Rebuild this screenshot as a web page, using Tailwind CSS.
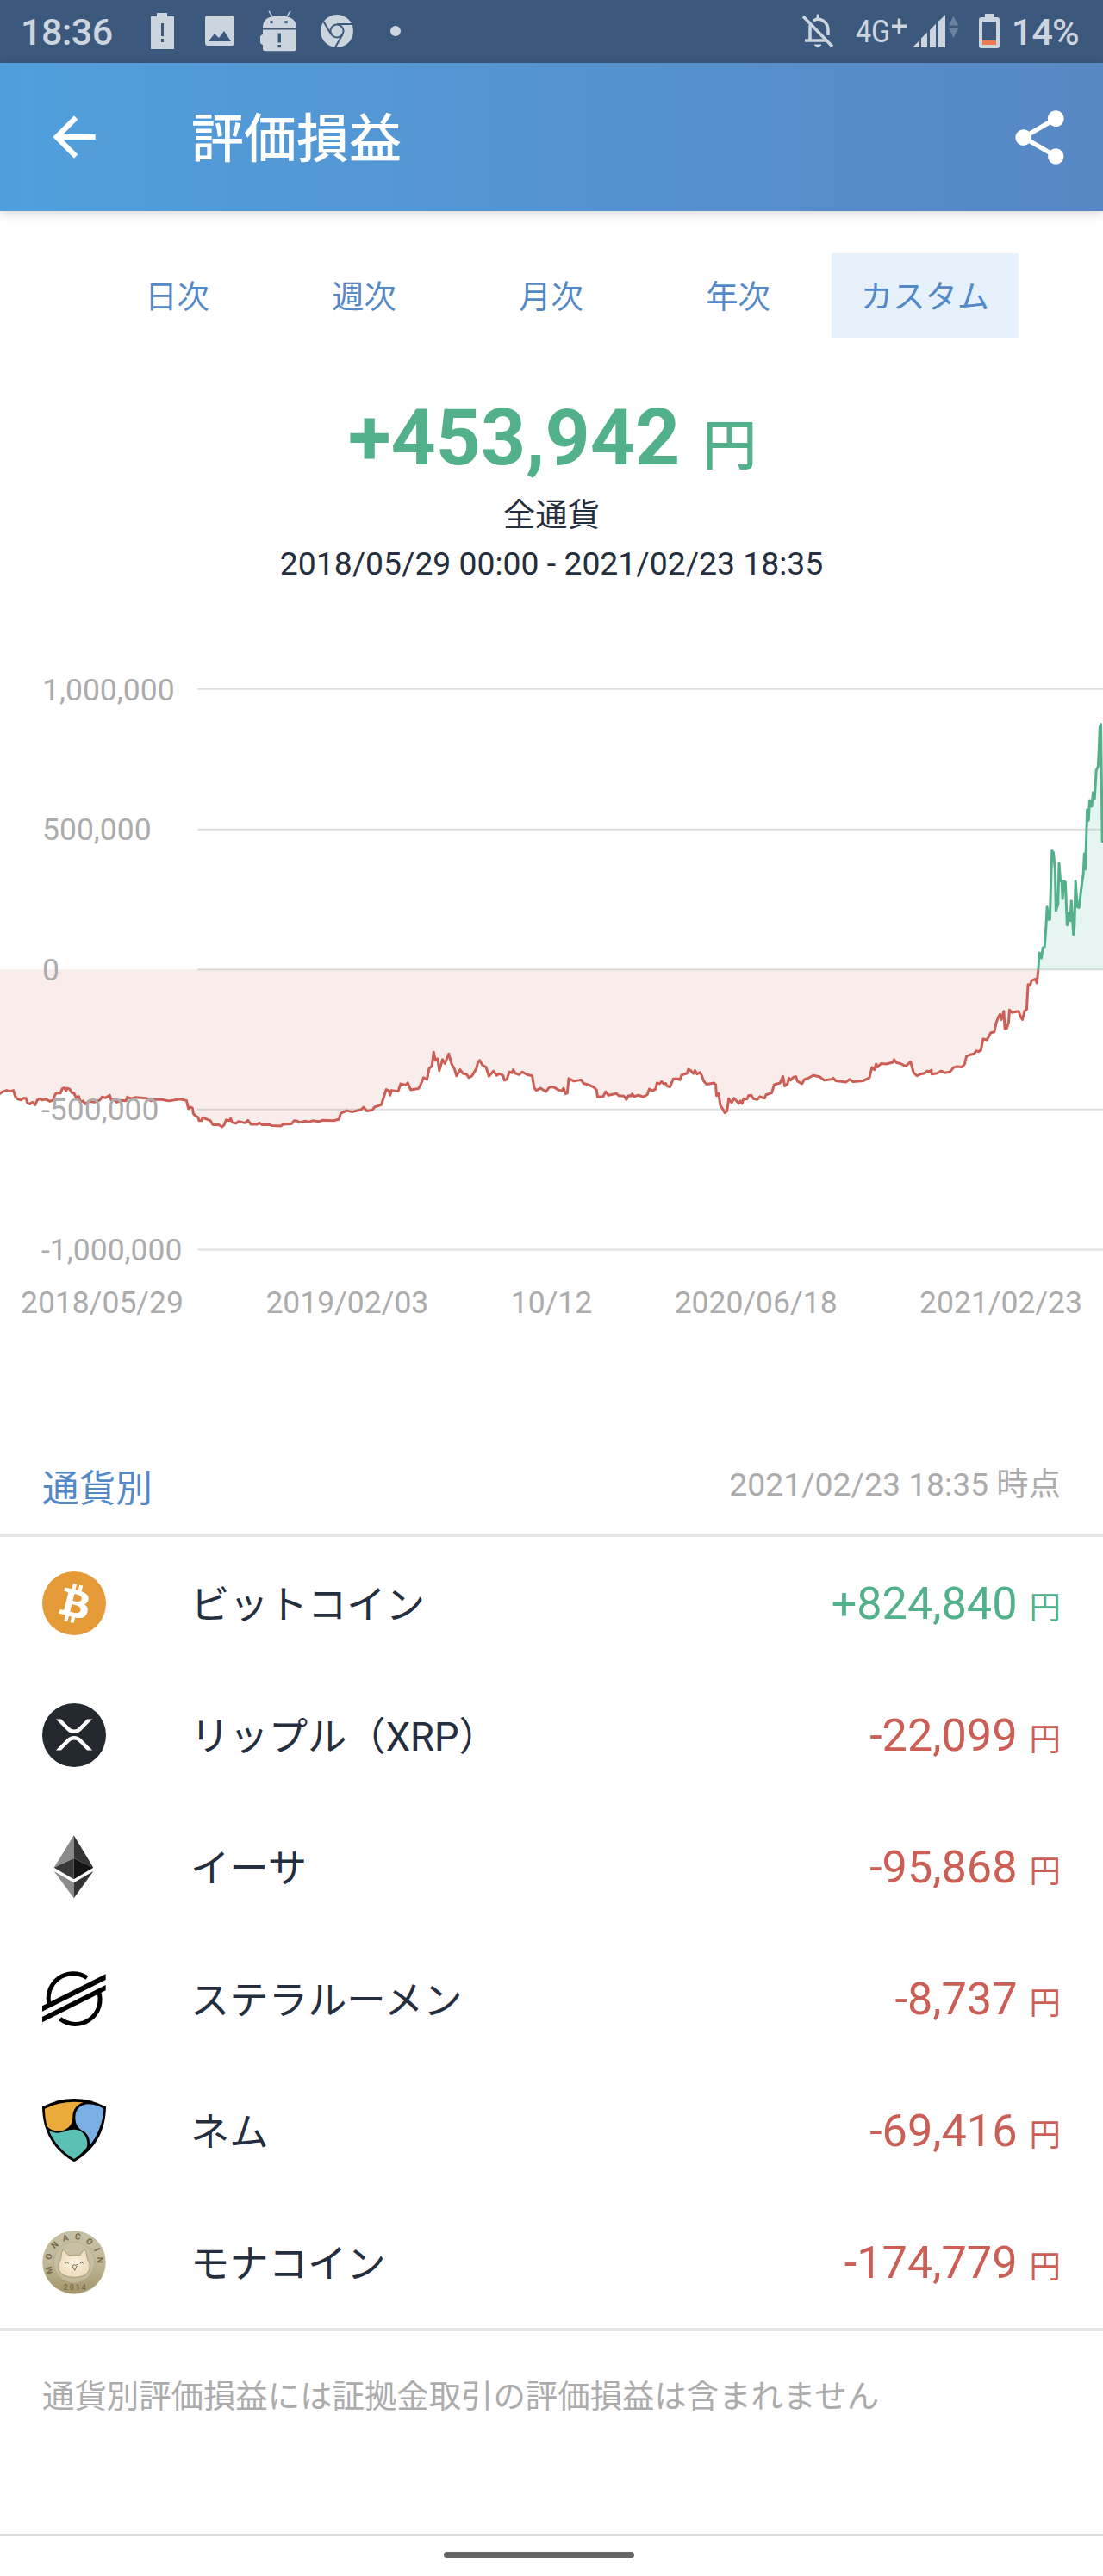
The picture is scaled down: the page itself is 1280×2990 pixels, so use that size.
<!DOCTYPE html>
<html lang="ja">
<head>
  <meta charset="UTF-8">
  <title>評価損益</title>
  <script src="https://cdn.jsdelivr.net/npm/@tailwindcss/browser@4"></script>
</head>
<body class="bg-white w-[1280px] h-[2990px] overflow-hidden flex flex-col leading-none text-[#252e3e] font-[Roboto,'Noto_Sans_CJK_JP',sans-serif]">

  <!-- Status bar -->
  <div class="h-[73px] shrink-0 bg-[#3c597d] text-[#ccd4de] flex items-center pl-6 pr-[28px] pb-[2px]">
    <span class="text-[43px] font-medium tracking-[-0.5px] w-[146px] pt-[4px]">18:36</span>
    <svg class="w-[36px] h-[44px]" viewBox="0 0 36 44" fill="currentColor">
      <path fill-rule="evenodd" d="M5 5h7V1h12v4h8v38H5zM17 13v15h3V13zM17 31v4h3v-4z"/>
    </svg>
    <svg class="w-[36px] h-[36px] ml-[31px]" viewBox="0 0 36 36" fill="currentColor">
      <path fill-rule="evenodd" d="M4 0h28a3 3 0 0 1 3 3v29a3 3 0 0 1-3 3H4a3 3 0 0 1-3-3V3a3 3 0 0 1 3-3zM5 30h26l-8-12-6 8-5-5z"/>
    </svg>
    <svg class="w-[44px] h-[48px] ml-[28px]" viewBox="0 -5 44 60" preserveAspectRatio="none" fill="currentColor">
      <path d="M11 -4l4 8M36 -4l-4 8" stroke="currentColor" stroke-width="1.5" fill="none"/>
      <path fill-rule="evenodd" d="M4 21C4 6 12 3 23 3s20 3 20 18zM14 10a2 2 0 1 0 .1 0zM31 10a2 2 0 1 0 .1 0z"/>
      <path fill-rule="evenodd" d="M4 23h39v28a3 3 0 0 1-3 3H7a3 3 0 0 1-3-3v-6q-3-1-3-4v-7q0-3 3-4zM21.500 28v14h3.500V28zM21.500 45v4h3.500v-4z"/>
    </svg>
    <svg class="w-[40px] h-[40px] ml-[26px]" viewBox="0 0 40 40">
      <circle cx="20" cy="20" r="19" fill="currentColor"/>
      <g fill="none" stroke="#3c597d" stroke-width="2">
        <circle cx="20" cy="20" r="7.5"/>
        <path d="M20 12h18M13.300 24L4.500 9M26.500 24L18 39"/>
      </g>
    </svg>
    <span class="w-[12px] h-[12px] rounded-full bg-[#ccd4de] ml-[42px]"></span>

    <svg class="w-[40px] h-[40px] ml-auto" viewBox="0 0 40 40" fill="none" stroke="currentColor" stroke-width="3.500">
      <path d="M3 3l34 35"/>
      <path d="M11 13v17M5 31h24M15 8c8-5 17 2 17 11v6"/>
      <path d="M16 36h8l-4 3zM19 1h2v4h-2z" fill="currentColor" stroke-width="1"/>
    </svg>
    <svg class="w-[62px] h-[44px] ml-[24px]" viewBox="0 0 62 44" fill="currentColor">
      <text x="0" y="35" font-family="Roboto" font-size="37" textLength="40" lengthAdjust="spacingAndGlyphs">4G</text>
      <path d="M42 14.500h17v3.500H42zM48.700 7.500h3.500v18h-3.500z"/>
    </svg>
    <svg class="w-[54px] h-[38px] ml-[4px]" viewBox="0 0 54 38" fill="currentColor">
      <path d="M0 38l8-8v8zM10 27.500l7-7V38h-7zM20 18l7-7.500V38h-7zM30 8l8-8v38h-8z"/>
      <path fill="#6c819c" d="M42 12.500l5.500-11 5.500 11zM42 16h11l-5.500 11z"/>
    </svg>
    <svg class="w-[24px] h-[40px] ml-[23px]" viewBox="0 0 24 40">
      <path fill="currentColor" fill-rule="evenodd" d="M7 0h10v4h4a3 3 0 0 1 3 3v30a3 3 0 0 1-3 3H3a3 3 0 0 1-3-3V7a3 3 0 0 1 3-3h4zM4 9v26h16V9z"/>
      <path fill="#ee7a4f" d="M4 31h16v5H4z"/>
    </svg>
    <span class="text-[43px] font-medium tracking-[-0.8px] pt-[4px] ml-[14px]">14%</span>
  </div>

  <!-- App bar -->
  <header class="h-[172px] shrink-0 bg-linear-to-r from-[#509fdc] to-[#5788c4] text-white flex items-center pl-[49px] pr-[36px] shadow-[0_2px_12px_rgba(0,0,0,0.18)]">
    <svg class="w-[74px] h-[74px]" viewBox="0 0 24 24" fill="currentColor"><path d="M20 11H7.830l5.590-5.590L12 4l-8 8 8 8 1.410-1.410L7.830 13H20v-2z"/></svg>
    <h1 class="text-[61px] font-medium ml-[99px] pt-[7px]">評価損益</h1>
    <svg class="w-[75px] h-[75px] ml-auto" viewBox="0 0 24 24" fill="currentColor"><path d="M18 16.080c-.76 0-1.440.3-1.960.77L8.910 12.700c.05-.23.09-.46.09-.7s-.04-.47-.09-.7l7.050-4.110c.54.5 1.250.81 2.040.81 1.660 0 3-1.340 3-3s-1.340-3-3-3-3 1.340-3 3c0 .24.04.47.09.7L8.040 9.810C7.500 9.310 6.790 9 6 9c-1.660 0-3 1.340-3 3s1.340 3 3 3c.79 0 1.500-.31 2.040-.81l7.120 4.160c-.05.21-.08.43-.08.65 0 1.610 1.310 2.920 2.920 2.920s2.920-1.310 2.920-2.920-1.310-2.920-2.920-2.920z"/></svg>
  </header>

  <!-- Period tabs -->
  <nav class="mt-[49px] mx-[97px] grid grid-cols-5 h-[98px] shrink-0 text-[37.33px] text-[#5489c7] pr-[1px]">
    <a class="flex items-center justify-center pt-[5px]">日次</a>
    <a class="flex items-center justify-center pt-[5px]">週次</a>
    <a class="flex items-center justify-center pt-[5px]">月次</a>
    <a class="flex items-center justify-center pt-[5px]">年次</a>
    <a class="flex items-center justify-center pt-[5px] bg-[#e7f1fb]">カスタム</a>
  </nav>

  <!-- Total -->
  <section class="h-[326px] shrink-0 pt-[71px] flex flex-col items-center">
    <div class="flex items-baseline text-[#52b08b] h-[91px] pl-[2px]">
      <span class="text-[91px] font-bold">+453,942</span>
      <span class="text-[63px] font-medium ml-[26px]">円</span>
    </div>
    <p class="text-[37.33px] mt-[26px]">全通貨</p>
    <p class="text-[37.33px] mt-[19px]">2018/05/29 00:00 - 2021/02/23 18:35</p>
  </section>

  <!-- Chart -->
  <section class="relative h-[813px] shrink-0 text-[35.5px] text-[#acacac]">
    <svg class="absolute left-0 top-[42px] w-[1280px] h-[800px]" viewBox="0 0 3136 1568" preserveAspectRatio="none">
      <path d="M561 78H3136M561 397.500H3136M561 716H3136M561 1034.500H3136M561 1353.500H3136" stroke="#dfdfdf" stroke-width="4" fill="none"/>
      <g stroke-width="3" stroke-linejoin="round">
        <path vector-effect="non-scaling-stroke" stroke="#cb5e55" fill="#cb5e55" fill-opacity=".11" d="M-20 716V998H0L8 994 18 991 30 993 38 991 43 1004 50 1011 60 1013 66 1009 74 1009 78 1020 85 1022 92 1018 100 1024 106 1013 113 1010 120 1013 130 1011 142 1016 151 1013 156 1002 160 997 172 997 177 987 183 985 188 992 191 986 198 988 204 996 210 997 216 1007 224 1005 229 1017 236 1015 242 1022 252 1016 268 1018 284 1013 290 1006 300 1008 312 1002 316 1013 324 1012 332 1018 344 1014 358 1015 362 1006 372 1010 386 1007 416 1009 430 1015 438 1012 460 1012 480 1015 512 1011 530 1014 536 1033 541 1029 547 1031 550 1044 556 1049 563 1052 566 1060 573 1060 576 1053 597 1059 605 1069 622 1069 631 1074 637 1070 643 1058 652 1060 656 1055 660 1064 671 1066 678 1062 697 1065 705 1059 713 1068 731 1068 738 1065 745 1069 766 1069 772 1071 799 1072 805 1068 829 1067 836 1060 846 1061 850 1064 868 1061 878 1063 888 1060 907 1062 916 1059 948 1060 963 1057 969 1043 986 1037 1001 1040 1026 1035 1034 1029 1043 1038 1058 1036 1065 1029 1084 1024 1098 989 1106 992 1109 1002 1113 991 1132 993 1139 976 1153 979 1159 974 1168 990 1190 987 1197 976 1204 962 1214 966 1220 941 1228 936 1233 904 1238 923 1244 919 1249 946 1258 921 1265 930 1276 908 1284 931 1292 942 1298 958 1308 944 1317 953 1326 954 1333 962 1342 958 1354 942 1359 927 1364 923 1372 934 1382 938 1390 959 1403 947 1412 957 1419 953 1430 957 1434 968 1441 966 1448 949 1456 951 1459 944 1465 952 1476 955 1485 949 1498 955 1513 958 1519 986 1525 991 1537 986 1552 994 1563 983 1575 984 1588 990 1598 992 1602 986 1608 999 1613 997 1617 964 1632 970 1652 967 1659 975 1672 978 1687 983 1696 990 1699 1006 1715 1005 1722 994 1730 1002 1752 998 1759 1003 1774 1004 1781 1012 1787 1003 1794 1004 1797 999 1803 1005 1815 1002 1829 1006 1840 1001 1846 988 1855 992 1864 988 1868 974 1875 976 1881 971 1887 976 1893 975 1896 981 1905 983 1914 965 1928 965 1933 967 1938 956 1954 952 1957 943 1964 946 1972 953 1976 946 1982 954 1990 950 1995 957 2001 970 2009 977 2030 974 2035 978 2037 1003 2043 998 2048 1025 2056 1035 2061 1042 2067 1038 2072 1010 2080 1019 2087 1009 2101 1021 2105 1015 2110 1021 2114 1010 2124 1011 2128 1003 2136 1002 2142 1010 2153 1012 2161 1005 2169 1008 2174 1009 2178 1001 2194 997 2201 978 2218 974 2226 959 2231 981 2239 976 2243 963 2248 968 2256 961 2263 960 2267 970 2280 976 2287 966 2301 962 2312 957 2330 960 2344 968 2364 966 2369 963 2376 969 2405 972 2416 966 2425 971 2455 969 2472 962 2479 939 2486 944 2491 931 2495 938 2505 930 2520 931 2539 927 2542 921 2549 928 2560 930 2575 936 2589 926 2597 950 2607 958 2617 954 2629 952 2636 947 2643 949 2648 945 2649 954 2665 952 2676 947 2686 951 2701 949 2711 939 2720 937 2735 938 2742 932 2748 913 2758 910 2770 908 2775 901 2782 903 2789 899 2795 874 2806 876 2817 860 2827 858 2832 838 2838 825 2843 818 2847 830 2854 811 2857 851 2862 850 2868 835 2870 808 2877 814 2896 811 2902 824 2907 830 2913 811 2919 807 2923 750 2929 752 2933 741 2944 738 2948 747 2952 716"/>
        <path vector-effect="non-scaling-stroke" stroke="#52b08b" fill="#3aae93" fill-opacity=".12" d="M2952 716L2955 678 2961 690 2965 667 2970 664 2974 620 2977 574 2981 602 2985 602 2989 490 2991 446 2995 450 3000 490 3002 582 3008 568 3011 474 3015 515 3019 515 3021 555 3025 515 3029 517 3034 615 3039 588 3043 605 3046 560 3052 637 3055 615 3058 515 3063 573 3068 575 3073 540 3077 515 3080 500 3083 453 3086 488 3091 353 3095 377 3098 331 3104 345 3108 313 3112 327 3117 262 3122 255 3124 225 3127 165 3130 158 3134 425H3160V716"/>
      </g>
    </svg>
    <div class="relative w-[229px] flex flex-col pl-[49px] pt-[2px]">
      <div class="h-[162.6px] flex items-center">1,000,000</div>
      <div class="h-[162.6px] flex items-center">500,000</div>
      <div class="h-[162.6px] flex items-center">0</div>
      <div class="h-[162.6px] flex items-center -ml-[1px]">-500,000</div>
      <div class="h-[162.6px] flex items-center -ml-[1px]">-1,000,000</div>
    </div>
    <div class="absolute left-6 right-6 top-[777px] flex justify-between">
      <span>2018/05/29</span>
      <span>2019/02/03</span>
      <span>10/12</span>
      <span>2020/06/18</span>
      <span>2021/02/23</span>
    </div>
  </section>

  <!-- Per currency -->
  <section class="flex flex-col">
    <div class="h-[253px] border-b-4 border-[#e5e5e5] flex items-end justify-between pl-[49px] pr-[49px]">
      <h2 class="text-[42.67px] text-[#5489c7] pb-[30px]">通貨別</h2>
      <span class="text-[37.33px] text-[#acacac] pb-[38px]">2021/02/23 18:35 時点</span>
    </div>

    <ul class="text-[45.33px] border-b-4 border-[#e5e5e5]">
      <li class="h-[153px] flex items-center px-[49px]">
        <svg class="w-[74px] h-[74px]" viewBox="0 0 32 32">
          <circle cx="16" cy="16" r="16" fill="#e49b37"/>
          <path fill="#fff" d="M23.189 14.020c.314-2.096-1.283-3.223-3.465-3.975l.708-2.840-1.728-.43-.69 2.765c-.454-.114-.92-.22-1.385-.326l.695-2.783L15.596 6l-.708 2.839c-.376-.086-.746-.17-1.104-.26l.002-.009-2.384-.595-.46 1.846s1.283.294 1.256.312c.7.175.826.638.805 1.006l-.806 3.235c.048.012.11.03.18.057l-.183-.045-1.130 4.532c-.086.212-.303.531-.793.41.018.025-1.256-.313-1.256-.313l-.858 1.978 2.250.561c.418.105.828.215 1.231.318l-.715 2.872 1.727.43.708-2.840c.472.127.93.245 1.378.357l-.706 2.828 1.728.43.715-2.866c2.948.558 5.164.333 6.097-2.333.752-2.146-.037-3.385-1.588-4.192 1.130-.26 1.980-1.003 2.207-2.538zm-3.950 5.538c-.533 2.147-4.148.986-5.320.695l.95-3.805c1.172.293 4.929.872 4.370 3.110zm.535-5.569c-.487 1.953-3.495.96-4.470.717l.86-3.450c.975.243 4.118.696 3.610 2.733z"/>
        </svg>
        <span class="ml-[98px] pt-[6px]">ビットコイン</span>
        <span class="ml-auto pt-[4px] flex items-baseline text-[#52b08b]"><span class="text-[52.2px]">+824,840</span><span class="text-[36.5px] ml-[14px]">円</span></span>
      </li>
      <li class="h-[153px] flex items-center px-[49px]">
        <svg class="w-[74px] h-[74px]" viewBox="0 0 32 32">
          <circle cx="16" cy="16" r="16" fill="#23292e"/>
          <path fill="#fff" transform="translate(1.360 .400) scale(.915 .945)" d="M23.070 8h2.890l-6.015 5.957a5.621 5.621 0 01-7.890 0L6.035 8H8.930l4.570 4.523a3.556 3.556 0 004.996 0L23.070 8zM8.895 24.563H6l6.055-5.993a5.621 5.621 0 017.890 0L26 24.562h-2.895L18.500 20a3.556 3.556 0 00-4.996 0l-4.610 4.563z"/>
        </svg>
        <span class="ml-[98px] pt-[6px]">リップル（XRP）</span>
        <span class="ml-auto pt-[4px] flex items-baseline text-[#cb5e55]"><span class="text-[52.2px]">-22,099</span><span class="text-[36.5px] ml-[14px]">円</span></span>
      </li>
      <li class="h-[153px] flex items-center px-[49px]">
        <svg class="w-[74px] h-[74px]" viewBox="57 57 222 222">
          <path fill="#8a8a8a" d="M167 58L98 170l69-32z"/>
          <path fill="#343434" d="M167 58l68 112-68-32z"/>
          <path fill="#393939" d="M98 170l69-32v73z"/>
          <path fill="#141414" d="M235 170l-68-32v73z"/>
          <path fill="#8c8c8c" d="M98 183l69 40v54z"/>
          <path fill="#343434" d="M235 183l-68 40v54z"/>
        </svg>
        <span class="ml-[98px] pt-[6px]">イーサ</span>
        <span class="ml-auto pt-[4px] flex items-baseline text-[#cb5e55]"><span class="text-[52.2px]">-95,868</span><span class="text-[36.5px] ml-[14px]">円</span></span>
      </li>
      <li class="h-[153px] flex items-center px-[49px]">
        <svg class="w-[74px] h-[74px]" viewBox="57 516 222 222">
          <path d="M57 652L278 541v20L57 671zM57 690L278 579v19L57 709z"/>
          <path fill="none" stroke="#000" stroke-width="15" d="M83 652A86 86 0 0 1 213 554M253 600A86 86 0 0 1 119 697"/>
        </svg>
        <span class="ml-[98px] pt-[6px]">ステラルーメン</span>
        <span class="ml-auto pt-[4px] flex items-baseline text-[#cb5e55]"><span class="text-[52.2px]">-8,737</span><span class="text-[36.5px] ml-[14px]">円</span></span>
      </li>
      <li class="h-[153px] flex items-center px-[49px]">
        <svg class="w-[74px] h-[74px]" viewBox="57 75 222 222">
          <path d="M57 103Q168 47 279 103C278 190 238 256 168 295 98 256 58 190 57 103z"/>
          <path fill="#ebab3b" d="M66 110Q125 80 200 88C173 97 163 117 163 140 163 170 140 187 115 187 95 187 80 180 74 170 68 150 66 130 66 110z"/>
          <path fill="#7aafe3" d="M172 140C172 110 192 95 217 94 240 95 258 102 271 110 269 155 250 205 222 238 224 208 212 193 195 185 180 176 172 160 172 140z"/>
          <path fill="#5bc1b4" d="M81 187C122 205 135 182 168 182 195 182 214 205 214 230 214 240 212 246 208 250 195 265 180 277 168 285 130 262 100 232 81 187z"/>
        </svg>
        <span class="ml-[98px] pt-[6px]">ネム</span>
        <span class="ml-auto pt-[4px] flex items-baseline text-[#cb5e55]"><span class="text-[52.2px]">-69,416</span><span class="text-[36.5px] ml-[14px]">円</span></span>
      </li>
      <li class="h-[153px] flex items-center px-[49px]">
        <svg class="w-[74px] h-[74px]" viewBox="57 535 222 222">
          <defs>
            <linearGradient id="coin" x1="0" y1="0" x2="0" y2="1">
              <stop offset="0" stop-color="#c6c1a6"/><stop offset=".5" stop-color="#c0b898"/><stop offset="1" stop-color="#a39468"/>
            </linearGradient>
            <radialGradient id="face"><stop offset="0" stop-color="#fbf3e2"/><stop offset="1" stop-color="#eedcbd"/></radialGradient>
            <path id="arc" d="M97 683A80 80 0 1 1 238 685"/>
          </defs>
          <circle cx="168" cy="646" r="109" fill="url(#coin)" stroke="#b5ac8b" stroke-width="2"/>
          <circle cx="168" cy="646" r="71" fill="#c9c2a6" fill-opacity=".7" stroke="#b0a785" stroke-width="2"/>
          <path fill="url(#face)" stroke="#8f8058" stroke-width="2" d="M129 600l20 22q20-4 38 0l18-23q7 16 9 34 12 18 8 35-8 30-54 30t-54-30q-3-19 8-35 1-18 7-33z"/>
          <path fill="none" stroke="#77683f" stroke-width="3" d="M137 651l7-7 4 7M189 651l5-7 6 7M159 654q5 5 9 0 5 5 12-1M162 658l8 16 8-16"/>
          <g fill="#766a48" font-family="Roboto" font-weight="700">
            <text font-size="30" letter-spacing="19"><textPath href="#arc">MONACOIN</textPath></text>
            <text x="131" y="742" font-size="26" font-weight="500" textLength="78">2014</text>
          </g>
        </svg>
        <span class="ml-[98px] pt-[6px]">モナコイン</span>
        <span class="ml-auto pt-[4px] flex items-baseline text-[#cb5e55]"><span class="text-[52.2px]">-174,779</span><span class="text-[36.5px] ml-[14px]">円</span></span>
      </li>
    </ul>

    <p class="text-[37.4px] text-[#acacac] pl-[49px] pt-[58px]">通貨別評価損益には証拠金取引の評価損益は含まれません</p>
  </section>

  <!-- Gesture bar -->
  <div class="mt-auto h-[49px] shrink-0 border-t-[3px] border-[#dcdcdc] flex justify-center pt-[18px] pr-[29px]">
    <span class="w-[221px] h-[7px] rounded-full bg-[#666]"></span>
  </div>

</body>
</html>
